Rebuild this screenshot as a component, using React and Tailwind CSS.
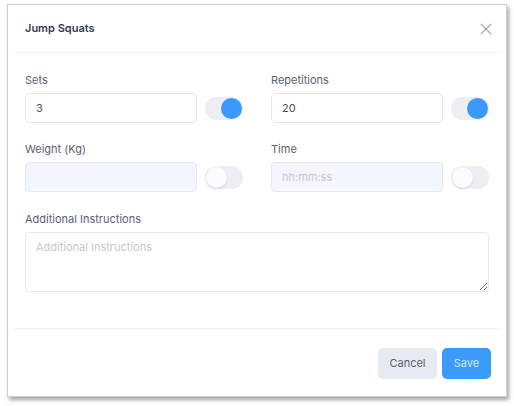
import React, { useState } from 'react';

function Toggle({ on }) {
  return (
    <div
      className={`flex h-[23px] w-[38px] shrink-0 items-center rounded-full bg-[#eceef4] px-[1px] ${
        on ? 'justify-end' : 'justify-start'
      }`}
    >
      <div
        className={`h-[21px] w-[21px] rounded-full ${
          on ? 'bg-[#3b99fc]' : 'bg-[#fbfcfd] shadow-[0_1px_2px_rgba(0,0,0,0.12)]'
        }`}
      />
    </div>
  );
}

function Field({ label, value, placeholder, disabled, on }) {
  return (
    <div>
      <label className="mb-[6px] block text-[11px] leading-[14px] text-[#5b6071]">{label}</label>
      <div className="flex items-center gap-2">
        <input
          defaultValue={value}
          placeholder={placeholder}
          disabled={disabled}
          className={`h-[30px] min-w-0 flex-1 rounded-[4px] border border-[#e6e9f0] px-[10px] text-[11px] text-[#4a4f5e] outline-none placeholder:text-[#c3c7cf] ${
            disabled ? 'bg-[#f3f6fc]' : 'bg-white'
          }`}
        />
        <Toggle on={on} />
      </div>
    </div>
  );
}

export default function App() {
  const [notes, setNotes] = useState('');

  return (
    <div className="min-h-[406px] bg-white pt-[4px] pl-[7px]" style={{ fontFamily: 'Inter, "Open Sans", sans-serif' }}>
      <div className="w-[500px] border border-[#cfcfcf] bg-white shadow-[2px_3px_4px_rgba(0,0,0,0.35)]">
        {/* header */}
        <div className="flex h-[47px] items-center justify-between pl-[17px] pr-[14px]">
          <h3 className="text-[11px] font-semibold text-[#363b4d]">Jump Squats</h3>
          <svg width="12" height="12" viewBox="0 0 14 14" className="text-[#9a9ea8]">
            <path d="M1 1L13 13M13 1L1 13" stroke="currentColor" strokeWidth="1.4" />
          </svg>
        </div>
        <div className="mx-[6px] h-px bg-[#eef0f4]" />

        {/* body */}
        <div className="px-[17px] pt-[20px] pb-[36px]">
          <div className="grid grid-cols-2 gap-x-7 gap-y-[19px]">
            <Field label="Sets" value="3" on />
            <Field label="Repetitions" value="20" on />
            <Field label="Weight (Kg)" disabled />
            <Field label="Time" placeholder="hh:mm:ss" disabled />
          </div>
          <div className="mt-[20px]">
            <label className="mb-[6px] block text-[11px] leading-[14px] text-[#5b6071]">Additional Instructions</label>
            <textarea
              value={notes}
              onChange={(e) => setNotes(e.target.value)}
              placeholder="Additional Instructions"
              className="block h-[60px] w-full rounded-[4px] border border-[#e6e9f0] px-[10px] py-[6px] text-[11px] text-[#4a4f5e] outline-none placeholder:text-[#c3c7cf]"
            />
          </div>
        </div>
        <div className="mx-[6px] h-px bg-[#eef0f4]" />

        {/* footer */}
        <div className="flex justify-end gap-[5px] px-[15px] pt-[19px] pb-[17px]">
          <button className="h-[31px] w-[59px] rounded-[5px] bg-[#e8eaf1] text-[11px] text-[#5a5e6e]">Cancel</button>
          <button className="h-[31px] w-[49px] rounded-[5px] bg-[#3a9bfb] text-[11px] text-[#d6eaff]">Save</button>
        </div>
      </div>
    </div>
  );
}
